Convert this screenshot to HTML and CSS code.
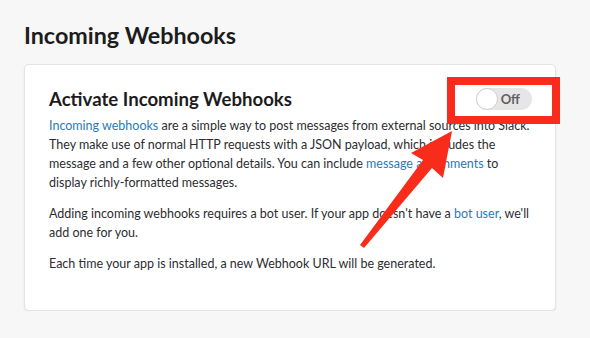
FILE: index.html
```html
<!DOCTYPE html>
<html lang="en">
<head>
    <meta charset="UTF-8">
    <meta name="viewport" content="width=device-width, initial-scale=1.0">
    <title>Incoming Webhooks</title>
    <link rel="stylesheet" href="styles.css">
</head>
<body>
    <h1 class="page-title">Incoming Webhooks</h1>
    <div class="card">
        <div class="card-head">
            <h2>Activate Incoming Webhooks</h2>
            <div class="toggle">
                <span class="knob"></span>
                <span class="toggle-label">Off</span>
            </div>
        </div>
        <p><a href="#">Incoming webhooks</a> are a simple way to post messages from external sources into Slack. They make use of normal HTTP requests with a JSON payload, which includes the message and a few other optional details. You can include <a href="#">message attachments</a> to display richly-formatted messages.</p>
        <p>Adding incoming webhooks requires a bot user. If your app doesn't have a <a href="#">bot user</a>, we'll add one for you.</p>
        <p>Each time your app is installed, a new Webhook URL will be generated.</p>
    </div>

    <!-- annotation layer -->
    <svg class="markup" width="590" height="338" viewBox="0 0 590 338">
        <rect x="451" y="81" width="105" height="39" fill="none" stroke="#f92c1c" stroke-width="8"/>
        <polygon points="452,131 443,178 432,168 364,248 360,245 423,160 411,153" fill="#f92c1c"/>
    </svg>
</body>
</html>
```

FILE: styles.css
```css
body {
    margin: 0;
    padding: 0 34px 0 24px;
    background: #f7f7f7;
    font-family: Lato, "Open Sans", sans-serif;
    color: #2c2d30;
    position: relative;
}
.page-title {
    margin: 20px 0 14px;
    font-size: 23.3px;
    line-height: 30px;
    font-weight: 700;
    color: #1d1c1d;
}
.card {
    background: white;
    border: 1px solid #e4e4e4;
    border-radius: 5px;
    box-shadow: 0 1px 2px rgba(0, 0, 0, 0.08);
    padding: 21px 23px 37px 24px;
}
.card-head {
    display: flex;
    align-items: center;
    justify-content: space-between;
}
.card-head h2 {
    margin: 0;
    font-size: 18.6px;
    line-height: 26px;
    font-weight: 700;
    color: #1d1c1d;
}
.toggle {
    width: 56px;
    height: 22px;
    border-radius: 11px;
    background: #e6e6e6;
    display: flex;
    align-items: center;
    justify-content: space-between;
    box-sizing: border-box;
    padding-right: 12px;
}
.knob {
    width: 22px;
    height: 22px;
    border-radius: 50%;
    background: white;
    border: 1px solid #cfcfcf;
    box-sizing: border-box;
}
.toggle-label {
    font-size: 13px;
    font-weight: 700;
    color: #616061;
}
p {
    margin: 4px 0 12px;
    font-size: 12.5px;
    line-height: 19px;
}
p + p { margin-top: 0; }
p:last-child { margin-bottom: 0; }
a {
    color: #2a7bb8;
    text-decoration: none;
}
.markup {
    position: absolute;
    top: 0;
    left: 0;
    pointer-events: none;
}
```
